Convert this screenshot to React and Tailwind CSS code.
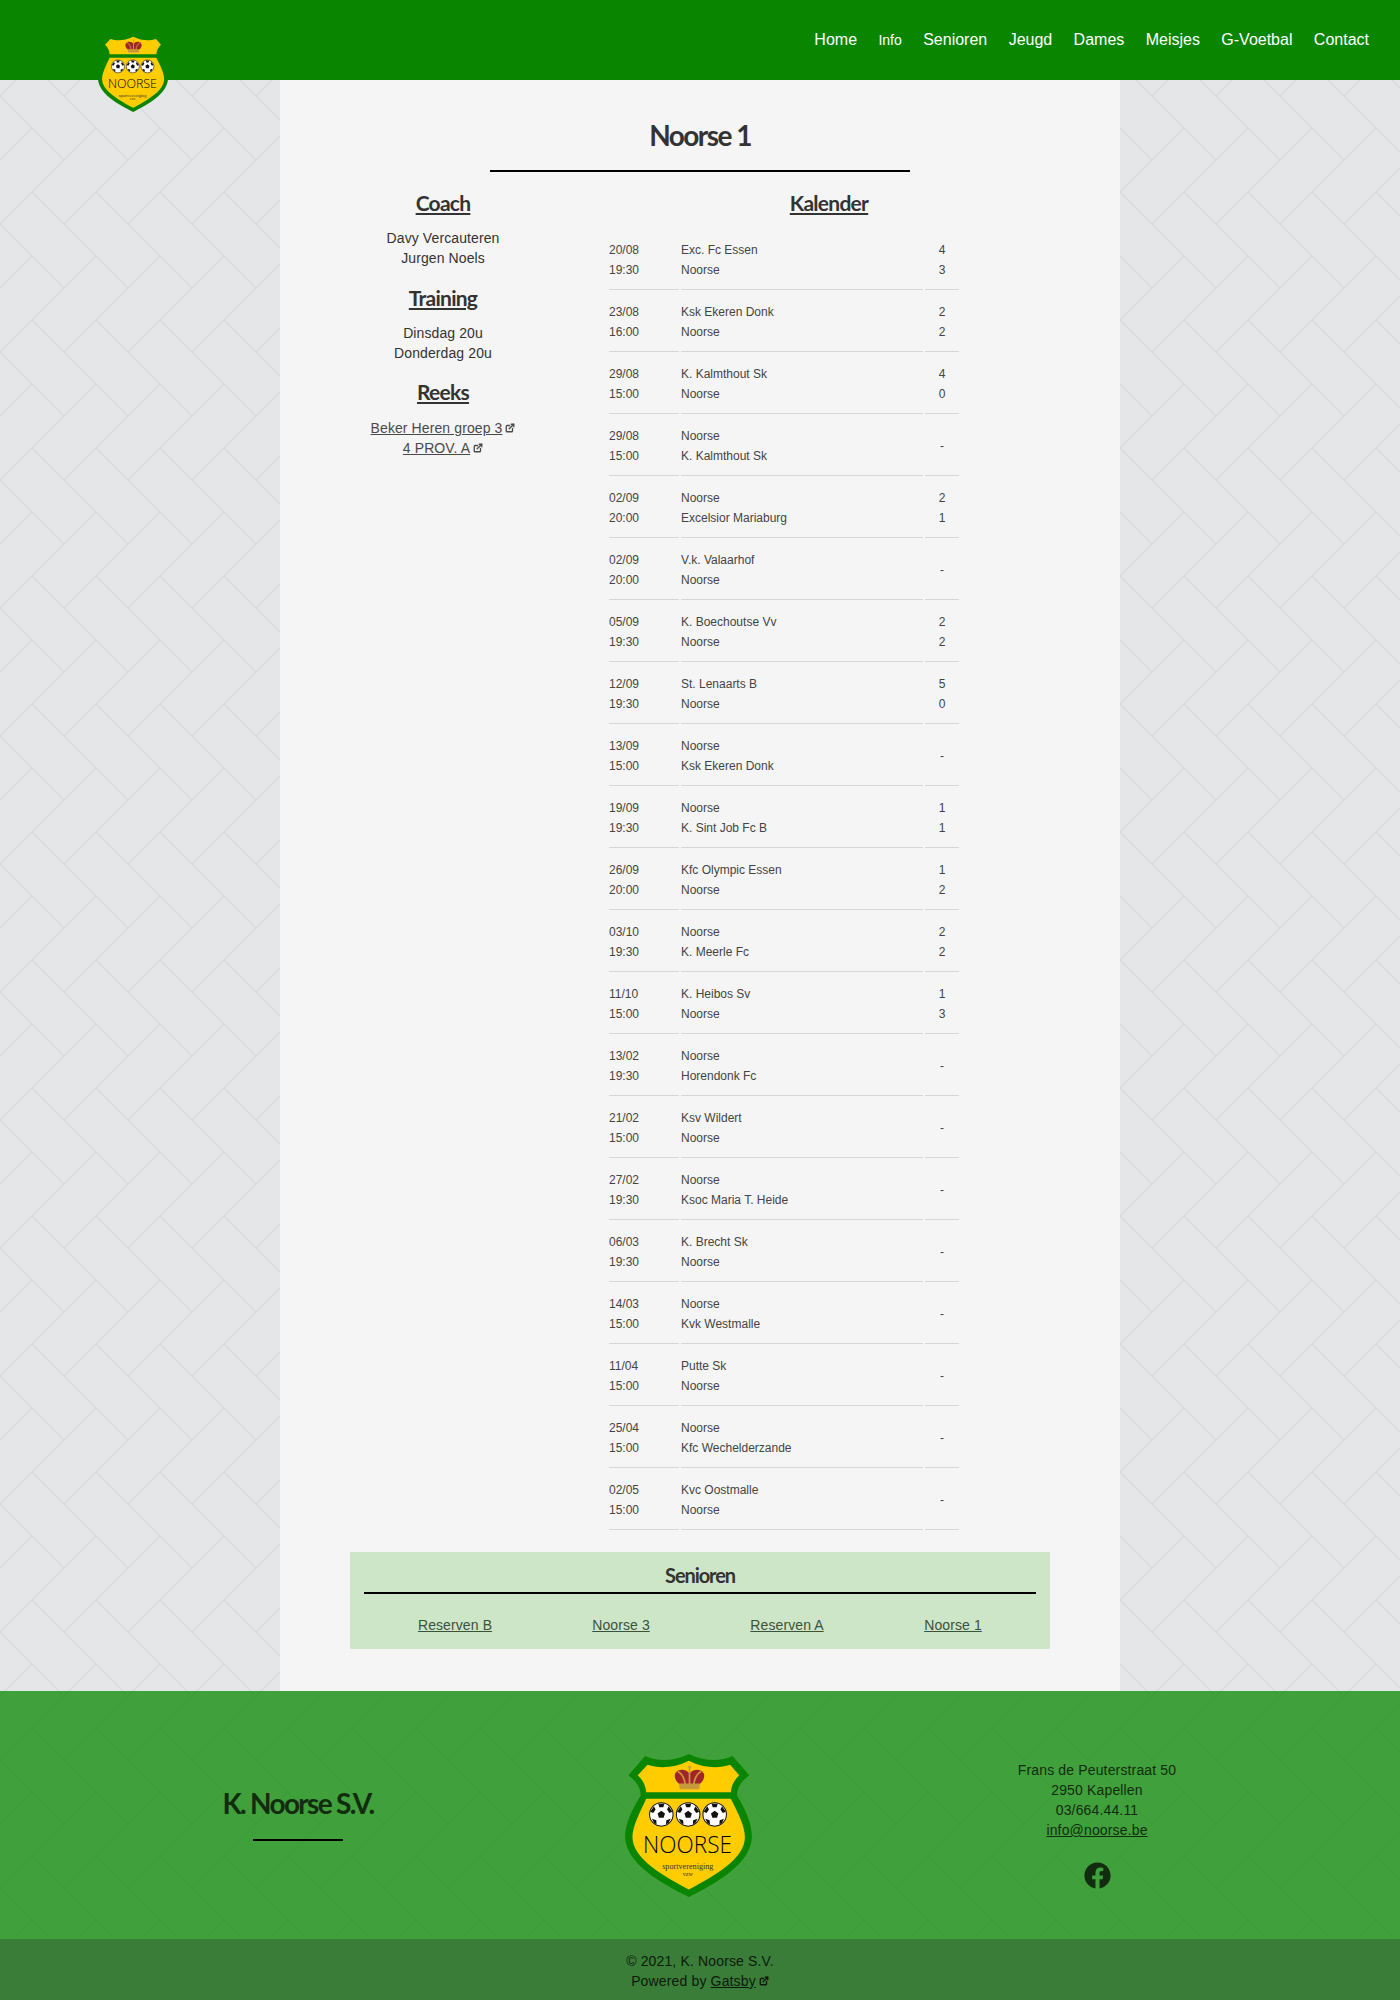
import { FiExternalLink } from 'react-icons/fi';
import { FaFacebook } from 'react-icons/fa';

const navItems = [
  { label: 'Home' },
  { label: 'Info', small: true },
  { label: 'Senioren' },
  { label: 'Jeugd' },
  { label: 'Dames' },
  { label: 'Meisjes' },
  { label: 'G-Voetbal' },
  { label: 'Contact' },
];

const matches = [
  ['20/08', '19:30', 'Exc. Fc Essen', 'Noorse', '4', '3'],
  ['23/08', '16:00', 'Ksk Ekeren Donk', 'Noorse', '2', '2'],
  ['29/08', '15:00', 'K. Kalmthout Sk', 'Noorse', '4', '0'],
  ['29/08', '15:00', 'Noorse', 'K. Kalmthout Sk'],
  ['02/09', '20:00', 'Noorse', 'Excelsior Mariaburg', '2', '1'],
  ['02/09', '20:00', 'V.k. Valaarhof', 'Noorse'],
  ['05/09', '19:30', 'K. Boechoutse Vv', 'Noorse', '2', '2'],
  ['12/09', '19:30', 'St. Lenaarts B', 'Noorse', '5', '0'],
  ['13/09', '15:00', 'Noorse', 'Ksk Ekeren Donk'],
  ['19/09', '19:30', 'Noorse', 'K. Sint Job Fc B', '1', '1'],
  ['26/09', '20:00', 'Kfc Olympic Essen', 'Noorse', '1', '2'],
  ['03/10', '19:30', 'Noorse', 'K. Meerle Fc', '2', '2'],
  ['11/10', '15:00', 'K. Heibos Sv', 'Noorse', '1', '3'],
  ['13/02', '19:30', 'Noorse', 'Horendonk Fc'],
  ['21/02', '15:00', 'Ksv Wildert', 'Noorse'],
  ['27/02', '19:30', 'Noorse', 'Ksoc Maria T. Heide'],
  ['06/03', '19:30', 'K. Brecht Sk', 'Noorse'],
  ['14/03', '15:00', 'Noorse', 'Kvk Westmalle'],
  ['11/04', '15:00', 'Putte Sk', 'Noorse'],
  ['25/04', '15:00', 'Noorse', 'Kfc Wechelderzande'],
  ['02/05', '15:00', 'Kvc Oostmalle', 'Noorse'],
];

const seniorTeams = ['Reserven B', 'Noorse 3', 'Reserven A', 'Noorse 1'];

function Ball({ cx }) {
  return (
    <g transform={`translate(${cx} 252)`}>
      <circle r="35" fill="#fff" stroke="#111" strokeWidth="3" />
      <path d="M0 -11 L11 -3 L7 10 L-7 10 L-11 -3Z" fill="#111" />
      <path d="M-9 -32 L9 -32 L6 -21 L-6 -21Z M22 -24 L33 -8 L24 -4 L17 -15Z M-22 -24 L-33 -8 L-24 -4 L-17 -15Z M-28 13 L-15 17 L-14 29 L-21 26Z M28 13 L15 17 L14 29 L21 26Z" fill="#111" />
    </g>
  );
}

function Shield({ className }) {
  return (
    <svg viewBox="105 72 378 426" className={className}>
      <path d="M295 72 C250 95 200 95 165 78 L115 135 C140 155 150 170 152 195 C125 240 105 280 105 320 C110 400 210 455 295 498 C380 455 478 400 483 320 C483 280 465 240 438 195 C440 170 450 155 475 135 L425 78 C390 95 340 95 295 72Z" fill="#0a8500" />
      <path d="M295 92 C250 115 205 115 172 104 L143 135 C158 150 166 165 168 186 L420 186 C422 165 430 150 445 135 L418 104 C385 115 340 115 295 92Z" fill="#ffcc00" />
      <path d="M168 205 L420 205 C440 245 462 285 462 320 C462 385 370 435 295 476 C220 435 128 385 127 320 C127 285 150 245 168 205Z" fill="#ffcc00" />
      {/* crown */}
      <path d="M268 162 C252 152 246 128 264 121 C278 116 290 122 297 130 C304 122 316 116 330 121 C348 128 342 152 326 162Z" fill="#a3232a" />
      <path d="M262 124 C274 130 282 145 284 162 M332 124 C320 130 312 145 310 162 M297 124 V162 M293 110 H301 M297 108 V124" fill="none" stroke="#c79a3c" strokeWidth="5" />
      <path d="M266 160 H328 L326 177 H268Z" fill="#c79a3c" />
      {[213, 293, 372].map((x) => (
        <Ball key={x} cx={x} />
      ))}
      <text x="291" y="368" textAnchor="middle" textLength="265" lengthAdjust="spacingAndGlyphs" fontSize="72" fontFamily="'Open Sans', sans-serif" fontWeight="300" fill="#000">NOORSE</text>
      <text x="292" y="415" textAnchor="middle" fontSize="24" fontFamily="'Liberation Serif', serif" fill="#333">sportvereniging</text>
      <text x="292" y="436" textAnchor="middle" fontSize="18" fontFamily="'Liberation Serif', serif" fill="#333">vzw</text>
    </svg>
  );
}

function ExtLink({ children, className }) {
  return (
    <span className={className}>
      <a href="#" className="underline">{children}</a>
      <FiExternalLink strokeWidth={3.2} className="inline-block ml-[3px] text-[10px] align-[0px]" />
    </span>
  );
}

function SideHeading({ children }) {
  return <h3 className="font-['Lato',sans-serif] font-bold text-[21px] leading-[26px] tracking-[-0.035em] underline text-[#333]">{children}</h3>;
}

function Calendar() {
  return (
    <table className="border-separate border-spacing-[2px] text-[12px] leading-[20px] text-[#444] w-[354px] table-fixed -ml-[1px]">
      <colgroup>
        <col className="w-[70px]" />
        <col />
        <col className="w-[34px]" />
      </colgroup>
      <tbody>
        {matches.map((m, i) => (
          <tr key={i}>
            <td className="pt-[10px] pb-[9px] border-b border-[#d6d6d6]">{m[0]}<br />{m[1]}</td>
            <td className="pt-[10px] pb-[9px] border-b border-[#d6d6d6]">{m[2]}<br />{m[3]}</td>
            <td className="pt-[10px] pb-[9px] border-b border-[#d6d6d6] text-center">
              {m[4] ? <>{m[4]}<br />{m[5]}</> : '-'}
            </td>
          </tr>
        ))}
      </tbody>
    </table>
  );
}

export default function App() {
  return (
    <div className="relative font-['Liberation_Sans',sans-serif] bg-[#e5e6e8] bg-[url('data:image/svg+xml,%3Csvg%20xmlns=%22http://www.w3.org/2000/svg%22%20width=%2264%22%20height=%22128%22%3E%3Cpath%20d=%22M-1%2097L65%2031M-1%2033L33%20-1M32%2064L65%2097M-1%2095L33%20129M31%20-1L65%2033%22%20stroke=%22%23dbdcde%22%20stroke-width=%221.8%22%20fill=%22none%22/%3E%3C/svg%3E')]">
      <header className="h-20 bg-[#0a8500] flex items-center justify-end pr-[31px] pb-[1px]">
        <nav className="flex items-baseline gap-[21.4px] text-white">
          {navItems.map((item) => (
            <a key={item.label} href="#" className={item.small ? 'text-[14px]' : 'text-[16px]'}>{item.label}</a>
          ))}
        </nav>
      </header>
      <Shield className="absolute left-[98px] top-[33px] w-[70px] h-[79px]" />

      <main className="mx-auto w-[840px] h-[1611px] bg-[#f5f5f5] px-[70px] pt-[35px] text-[#333]">
        <h1 className="font-['Lato',sans-serif] font-bold text-[28px] leading-[40px] tracking-[-0.055em] text-center text-[#333]">Noorse 1</h1>
        <hr className="mx-auto mt-[15px] w-[420px] border-t-2 border-black" />

        <div className="flex mt-[18px]">
          <aside className="w-[186px] mr-[72px] text-center text-[14px] leading-[20px] tracking-[0.1px]">
            <SideHeading>Coach</SideHeading>
            <p className="mt-[12px]">Davy Vercauteren<br />Jurgen Noels</p>
            <div className="mt-[17px]"><SideHeading>Training</SideHeading></div>
            <p className="mt-[12px]">Dinsdag 20u<br />Donderdag 20u</p>
            <div className="mt-[16px]"><SideHeading>Reeks</SideHeading></div>
            <div className="mt-[13px] text-[#4a4a4a]">
              <ExtLink className="block">Beker Heren groep 3</ExtLink>
              <ExtLink className="block">4 PROV. A</ExtLink>
            </div>
          </aside>
          <section className="w-[442px]">
            <div className="text-center"><SideHeading>Kalender</SideHeading></div>
            <div className="mt-[12px]"><Calendar /></div>
          </section>
        </div>

        <div className="mt-[20px] h-[97px] bg-[#cee6c8] px-[14px] pt-[10px]">
          <h2 className="font-['Lato',sans-serif] font-bold text-[20px] leading-[26px] tracking-[-0.055em] text-center text-[#333]">Senioren</h2>
          <hr className="mt-[4px] border-t-2 border-black" />
          <div className="grid grid-cols-4 ml-[8px] mt-[21px] text-[14px] leading-[20px] tracking-[0.1px] text-center text-[#3a523a]">
            {seniorTeams.map((team) => (
              <a key={team} href="#" className="underline">{team}</a>
            ))}
          </div>
        </div>
      </main>

      <footer className="bg-[#168f0f]/80 text-[#122c0f] text-[14px] leading-[20px] tracking-[0.15px]">
        <div className="h-[248px] grid grid-cols-[596px_301px_400px] items-start">
          <div className="pt-[94px] text-center">
            <h2 className="font-['Lato',sans-serif] font-bold text-[28px] leading-[36px] tracking-[-0.06em]">K. Noorse S.V.</h2>
            <hr className="mx-auto mt-[18px] w-[90px] border-t-2 border-black" />
          </div>
          <div className="pt-[63px]">
            <Shield className="w-[127px] h-[143px] ml-[29px]" />
          </div>
          <div className="pt-[69px] text-center">
            <p>Frans de Peuterstraat 50<br />2950 Kapellen<br />03/664.44.11<br /><a href="#" className="underline">info@noorse.be</a></p>
            <FaFacebook className="mx-auto mt-[22px] text-[27px]" />
          </div>
        </div>
        <div className="h-[61px] bg-[#39773a]/85 pt-[12px] text-center text-[#0d1a0c]">
          <p>© 2021, K. Noorse S.V.</p>
          <p>Powered by <ExtLink>Gatsby</ExtLink></p>
        </div>
      </footer>
    </div>
  );
}
